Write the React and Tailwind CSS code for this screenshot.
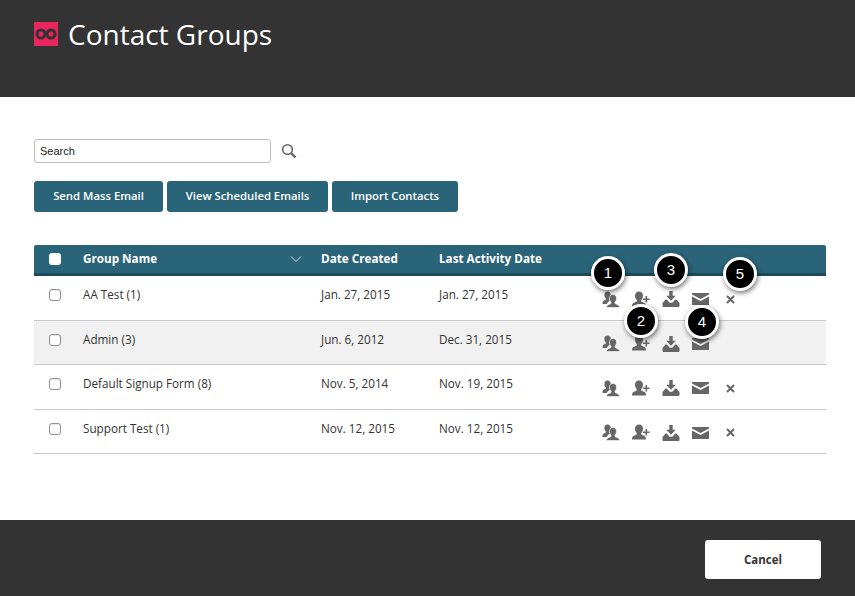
import React from 'react';

const rows = [
  { name: 'AA Test (1)', created: 'Jan. 27, 2015', last: 'Jan. 27, 2015', del: true },
  { name: 'Admin (3)', created: 'Jun. 6, 2012', last: 'Dec. 31, 2015', del: false, shaded: true },
  { name: 'Default Signup Form (8)', created: 'Nov. 5, 2014', last: 'Nov. 19, 2015', del: true },
  { name: 'Support Test (1)', created: 'Nov. 12, 2015', last: 'Nov. 12, 2015', del: true },
];

const GroupIcon = () => (
  <svg width="18" height="17" viewBox="0 0 18 17" fill="#666">
    <path d="M5.5 0.5c2 0 3.2 1.5 3.2 3.4 0 1.5-.6 2.8-1.4 3.6v1.4l1.2.7c-1.6.8-3 1.500-3.600 3.400H0.500c0-1.900.3-2.800 1.400-3.400l2-1V7.500C3 6.700 2.400 5.400 2.400 3.900 2.400 2 3.500.5 5.500.5z" />
    <path d="M11 3.500c2.200 0 3.500 1.600 3.500 3.700 0 1.600-.6 2.900-1.500 3.800v1.500l3 1.400c1 .5 1.500 1.300 1.500 2.600H4.500c0-1.300.5-2.100 1.500-2.600l3-1.400V11c-.9-.9-1.500-2.200-1.500-3.800C7.500 5.100 8.800 3.500 11 3.500z" stroke="#fff" strokeWidth="0.6" />
  </svg>
);

const AddUserIcon = () => (
  <svg width="18" height="17" viewBox="0 0 18 17" fill="#666">
    <path d="M7 0.500c2.500 0 4 1.900 4 4.200 0 1.900-.7 3.400-1.800 4.400v1.500l3.300 1.500c1.100.5 1.500 1.500 1.500 3.400H0c0-1.900.4-2.900 1.500-3.400l3.300-1.500V9.100C3.700 8.100 3 6.600 3 4.700 3 2.400 4.500.5 7 .5z" />
    <path d="M13.500 5h1.600v2.500h2.500v1.600h-2.500v2.500h-1.600V9.100H11V7.500h2.500z" />
  </svg>
);

const ImportIcon = () => (
  <svg width="18" height="16" viewBox="0 0 18 16" fill="#666">
    <path d="M7.300 0h3.400v4.800h3L9 9.800 4.300 4.800h3z" />
    <path d="M0.500 12L3.500 8.500h1.200l3 3.200h2.600l3-3.200h1.200l3 3.500v2.700c0 .8-.5 1.300-1.300 1.300H1.800c-.8 0-1.300-.5-1.300-1.300z" />
  </svg>
);

const MailIcon = () => (
  <svg width="17" height="12" viewBox="0 0 17 12" fill="#666">
    <path d="M0 0h17v1.500L8.500 6 0 1.500z" />
    <path d="M0 3.500l8.500 4.500 8.500-4.500V12H0z" />
  </svg>
);

const CloseIcon = () => (
  <svg width="9" height="9" viewBox="0 0 9 9" stroke="#666" strokeWidth="2">
    <path d="M1 1l7 7M8 1l-7 7" />
  </svg>
);

const Badge = ({ n, className }) => (
  <div className={`absolute w-[34px] h-[34px] rounded-full bg-black border-[3px] border-white shadow-[1px_2px_5px_rgba(0,0,0,0.55)] flex items-center justify-center text-white text-[15px] font-['Liberation_Sans',sans-serif] z-10 ${className}`}>
    {n}
  </div>
);

const Check = () => (
  <span className="block w-[12px] h-[12px] rounded-[3px] border border-[#8f8f8f] bg-white shadow-[inset_0_1px_1px_rgba(0,0,0,0.1)]" />
);

export default function App() {
  return (
    <div className="w-[855px] h-[596px] flex flex-col bg-white font-['Open_Sans',sans-serif] overflow-hidden">
      {/* header */}
      <div className="h-[97px] bg-[#333333] flex items-start pl-[34px] pt-[14px] shrink-0">
        <svg width="24" height="24" viewBox="0 0 24 24" className="mt-[8px]">
          <rect width="24" height="24" fill="#e9245f" />
          <circle cx="7" cy="12" r="4" fill="#e9245f" stroke="#333" strokeWidth="3" />
          <circle cx="17" cy="12" r="4" fill="#e9245f" stroke="#333" strokeWidth="3" />
        </svg>
        <h1 className="ml-[10px] text-[28px] leading-[40px] font-normal text-white">Contact Groups</h1>
      </div>

      {/* content */}
      <div className="flex-1 pl-[34px] pr-[29px] pt-[42px]">
        <div className="flex items-center">
          <div className="w-[237px] h-[24px] rounded-[3px] border border-[#bdbdbd] bg-white flex items-center pl-[5px] text-[11px] text-[#222] font-['Liberation_Sans',sans-serif]">
            Search
          </div>
          <svg width="16" height="16" viewBox="0 0 16 16" fill="none" stroke="#666" className="ml-[10px]">
            <circle cx="6.500" cy="6.500" r="4.800" strokeWidth="1.600" />
            <path d="M10 10l4.500 4.500" strokeWidth="2.400" />
          </svg>
        </div>

        <div className="flex gap-[4px] mt-[18px]">
          <button className="w-[129px] h-[31px] rounded-[3px] bg-[#2a6478] text-white text-[11.3px] font-semibold">Send Mass Email</button>
          <button className="w-[161px] h-[31px] rounded-[3px] bg-[#2a6478] text-white text-[11.3px] font-semibold">View Scheduled Emails</button>
          <button className="w-[126px] h-[31px] rounded-[3px] bg-[#2a6478] text-white text-[11.3px] font-semibold">Import Contacts</button>
        </div>

        {/* table */}
        <div className="relative mt-[33px]">
          <div className="h-[31px] flex items-center bg-[#2a6478] border-b-[3px] border-[#1d4a5a] rounded-t-[2px] text-white text-[11.7px] font-bold">
            <div className="w-[49px] pl-[15px]">
              <span className="block w-[12px] h-[12px] rounded-[3px] bg-white" />
            </div>
            <div className="w-[238px] flex items-center justify-between pr-[19px]">
              <span>Group Name</span>
              <svg width="12" height="6" viewBox="0 0 12 6" fill="none" stroke="#cfe0e6" strokeWidth="1">
                <path d="M1 .5l5 5 5-5" />
              </svg>
            </div>
            <div className="w-[118px]">Date Created</div>
            <div>Last Activity Date</div>
          </div>

          {rows.map((r) => (
            <div
              key={r.name}
              className={`h-[44.5px] flex items-center border-b border-[#c8c8c8] text-[11.7px] text-[#333] ${r.shaded ? 'bg-[#f1f1f1]' : 'bg-white'}`}
            >
              <div className="w-[49px] pl-[15px] mb-[5px]"><Check /></div>
              <div className="w-[238px] mb-[5px]">{r.name}</div>
              <div className="w-[118px] mb-[5px]">{r.created}</div>
              <div className="w-[157px] mb-[5px]">{r.last}</div>
              <div className="flex items-center h-[20px] mt-[3px]">
                <div className="w-[30px] flex justify-center"><GroupIcon /></div>
                <div className="w-[30px] flex justify-center"><AddUserIcon /></div>
                <div className="w-[30px] flex justify-center"><ImportIcon /></div>
                <div className="w-[29px] flex justify-center"><MailIcon /></div>
                <div className="w-[30px] flex justify-center">{r.del && <CloseIcon />}</div>
              </div>
            </div>
          ))}

          <Badge n="1" className="left-[557px] top-[11px]" />
          <Badge n="2" className="left-[590px] top-[59px]" />
          <Badge n="3" className="left-[620px] top-[8px]" />
          <Badge n="4" className="left-[651px] top-[60px]" />
          <Badge n="5" className="left-[689px] top-[12px]" />
        </div>
      </div>

      {/* footer */}
      <div className="h-[76px] bg-[#333333] flex items-start justify-end pr-[34px] pt-[20px] shrink-0">
        <button className="w-[116px] h-[39px] rounded-[3px] bg-white text-[#333] text-[11.5px] font-bold">Cancel</button>
      </div>
    </div>
  );
}
